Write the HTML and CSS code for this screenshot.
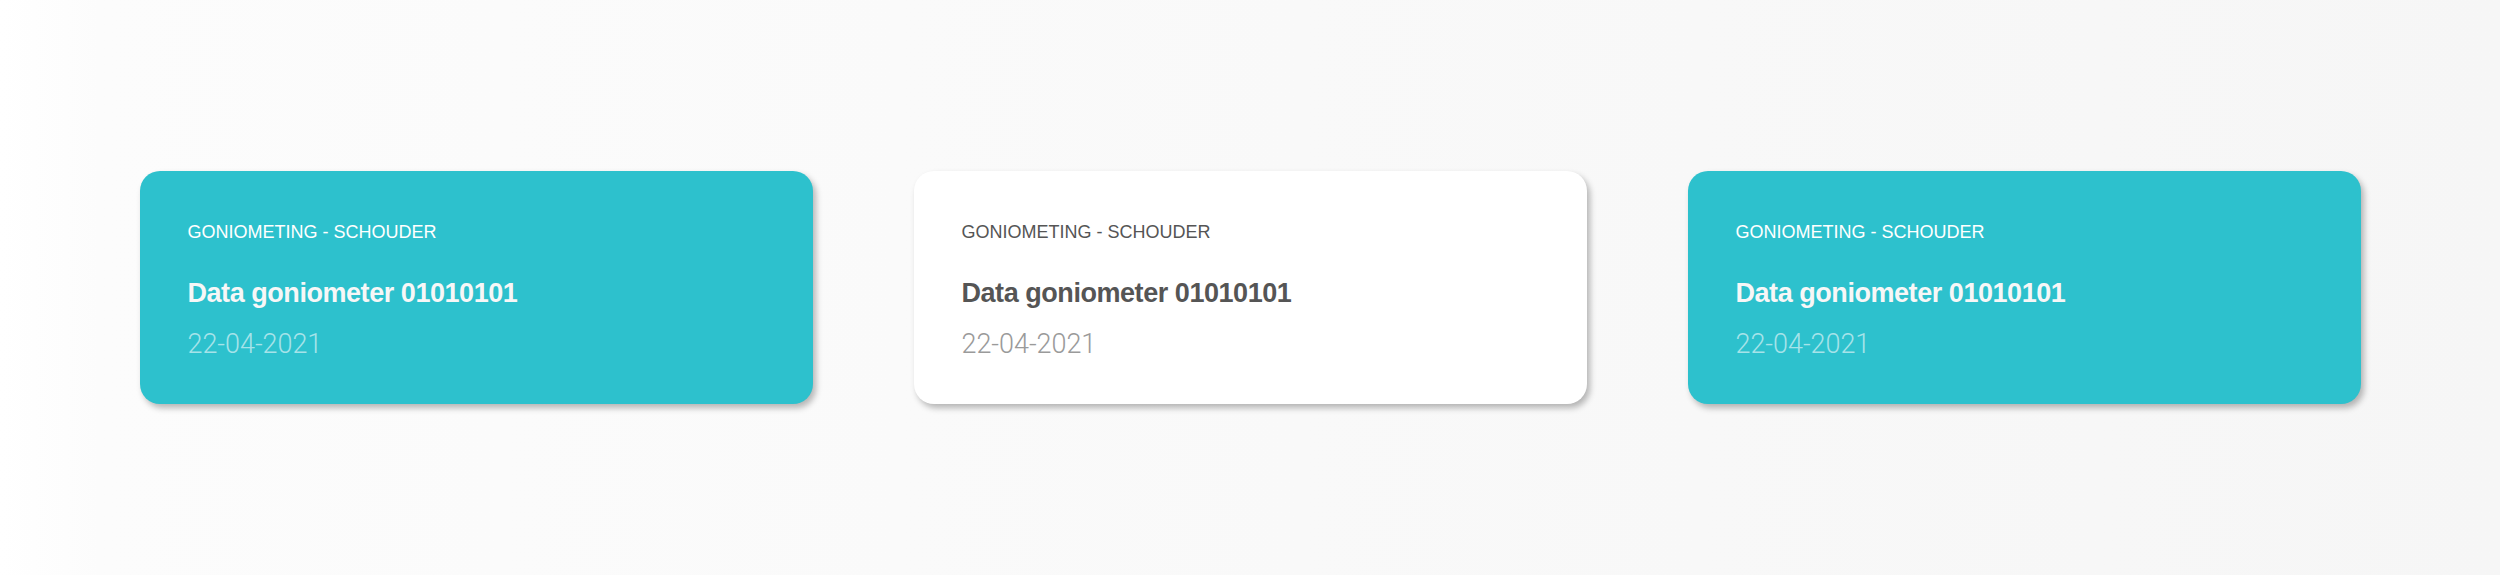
FILE: index.html
```html
<!DOCTYPE html>
<html lang="nl">
<head>
<meta charset="utf-8">
<title>Goniometing kaarten</title>
<link rel="stylesheet" href="styles.css">
</head>
<body>
<main class="stage">
  <article class="card card--teal">
    <p class="card__label">GONIOMETING - SCHOUDER</p>
    <h2 class="card__title">Data goniometer 01010101</h2>
    <p class="card__date">22-04-2021</p>
  </article>
  <article class="card card--white">
    <p class="card__label">GONIOMETING - SCHOUDER</p>
    <h2 class="card__title">Data goniometer 01010101</h2>
    <p class="card__date">22-04-2021</p>
  </article>
  <article class="card card--teal">
    <p class="card__label">GONIOMETING - SCHOUDER</p>
    <h2 class="card__title">Data goniometer 01010101</h2>
    <p class="card__date">22-04-2021</p>
  </article>
</main>
</body>
</html>
```

FILE: styles.css
```css
html, body {
  margin: 0;
  padding: 0;
}

body {
  width: 2500px;
  height: 575px;
  overflow: hidden;
  background: linear-gradient(to right, #ffffff 0%, #fcfcfc 4%, #f6f6f6 100%);
  font-family: "Liberation Sans", Arial, sans-serif;
}

.stage {
  height: 575px;
  display: flex;
  align-items: center;
  justify-content: center;
  gap: 101px;
}

.card {
  box-sizing: border-box;
  width: 673px;
  height: 233px;
  padding: 50px 48px 0 48px;
  border-radius: 20px;
  box-shadow: 3px 4px 6px rgba(0, 0, 0, 0.28);
}

.card--teal {
  background: #2dc1cd;
  color: #ffffff;
}

.card--white {
  background: #ffffff;
  color: #555555;
}

.card__label {
  margin: 0;
  font-size: 18px;
  line-height: 22px;
  font-weight: 400;
  letter-spacing: 0;
}

.card__title {
  margin: 34px 0 0 0;
  font-size: 27px;
  line-height: 32px;
  font-weight: 700;
  letter-spacing: -0.45px;
}

.card--teal .card__title {
  color: #f7f7f7;
}

.card__date {
  margin: 19px 0 0 0;
  font-family: Roboto, "Liberation Sans", sans-serif;
  font-size: 27px;
  line-height: 32px;
  font-weight: 300;
  letter-spacing: -0.05px;
}

.card--teal .card__date {
  color: #a6e3e9;
}

.card--white .card__date {
  color: #9a9a9a;
}
```
